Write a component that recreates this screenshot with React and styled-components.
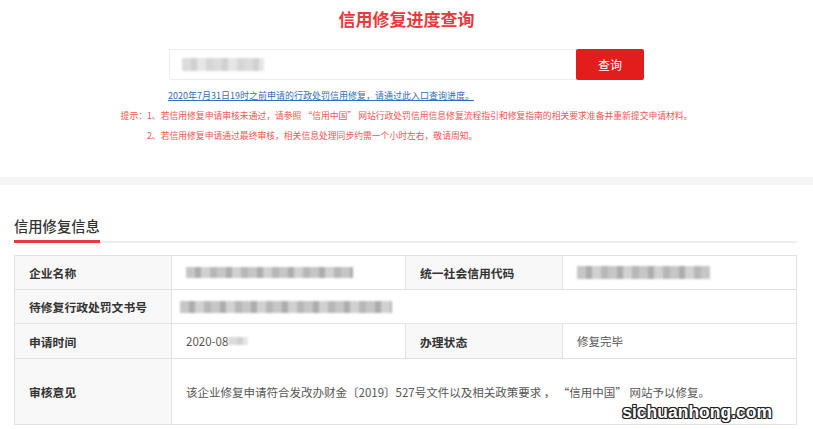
import React from 'react'
import styled, { createGlobalStyle } from 'styled-components'

const GlobalStyle = createGlobalStyle`
    html, body {
        margin: 0;
        padding: 0;
        background: #fff;
    }
    body {
        font-family: "Noto Sans CJK SC", "Noto Sans", sans-serif;
        color: #333;
    }
`;

// Top query area
const QueryArea = styled.section`
    display: flex;
    flex-direction: column;
    align-items: center;
    padding: 8px 0 34px;
`;

const PageTitle = styled.h1`
    margin: 0;
    font-size: 17px;
    line-height: 22px;
    font-weight: 700;
    color: #e63a3d;
`;

const SearchRow = styled.div`
    margin-top: 19px;
    display: flex;
    width: 475px;
    height: 31px;
`;

const SearchBox = styled.div`
    flex: 1;
    display: flex;
    align-items: center;
    padding-left: 12px;
    border: 1px solid #ececec;
    border-right: none;
    border-radius: 2px 0 0 2px;
    background: #fff;
`;

const SearchButton = styled.button`
    width: 68px;
    border: none;
    border-radius: 2px;
    background: #e31c1c;
    color: #fff;
    font-family: inherit;
    font-size: 12px;
    cursor: pointer;
`;

const OldEntry = styled.a`
    align-self: flex-start;
    margin: 10px 0 0 168px;
    font-size: 9px;
    line-height: 12px;
    color: #3a6cb3;
    text-decoration: underline;
`;

const Tips = styled.div`
    margin-top: 7px;
    display: flex;
    font-size: 8.8px;
    line-height: 14px;
    color: #ef5656;
`;

const TipList = styled.div`
    display: flex;
    flex-direction: column;
    gap: 6px;
`;

const Band = styled.div`
    height: 8px;
    background: #f5f5f5;
`;

// Info section
const InfoSection = styled.section`
    padding: 28px 16px 0 14px;
`;

const SectionHead = styled.div`
    border-bottom: 2px solid #eeeeee;
`;

const SectionTitle = styled.h2`
    display: inline-block;
    margin: 0 0 -2px;
    padding-bottom: 4px;
    font-size: 14.3px;
    line-height: 20px;
    font-weight: 500;
    color: #333;
    border-bottom: 3px solid #e8393c;
`;

const TableWrap = styled.div`
    position: relative;
    margin-top: 12px;
`;

const InfoTable = styled.div`
    display: grid;
    grid-template-columns: 157px 1fr 157px 1fr;
    grid-template-rows: 34px 34px 35px 66px;
    border-top: 1px solid #e2e2e2;
    border-left: 1px solid #e2e2e2;
`;

const Cell = styled.div`
    display: flex;
    align-items: center;
    padding-left: ${p => p.$pad ?? 14}px;
    border-right: 1px solid #e2e2e2;
    border-bottom: 1px solid #e2e2e2;
    grid-column: ${p => p.$span ? `span ${p.$span}` : 'auto'};
    background: ${p => p.$label ? '#f8f8f8' : '#fff'};
    font-size: ${p => p.$label ? '11.8px' : '11.5px'};
    font-weight: ${p => p.$label ? 700 : 400};
    color: ${p => p.$label ? '#333' : '#555'};
    white-space: pre;
`;

// blurred (masked) values in the screenshot
const Blur = styled.span`
    display: inline-block;
    width: ${p => p.$w}px;
    height: ${p => p.$h || 11}px;
    background: repeating-linear-gradient(
        90deg,
        ${p => p.$light ? '#d6d6d6' : '#bdbdbd'} 0 9px,
        ${p => p.$light ? '#c9c9c9' : '#9f9f9f'} 9px 15px,
        ${p => p.$light ? '#e2e2e2' : '#cacaca'} 15px 24px,
        ${p => p.$light ? '#cfcfcf' : '#ababab'} 24px 31px
    );
    filter: blur(1.3px);
    opacity: 0.85;
`;

const Watermark = styled.span`
    position: absolute;
    right: 25px;
    bottom: 2px;
    font-family: "Liberation Sans", Arial, sans-serif;
    font-size: 17.5px;
    font-weight: 700;
    color: #fff;
    text-shadow:
        1px 0 0 #222, -1px 0 0 #222, 0 1px 0 #222, 0 -1px 0 #222,
        1px 1px 0 #222, -1px -1px 0 #222, 1px -1px 0 #222, -1px 1px 0 #222;
`;

const App = () => {
    return (
        <>
            <GlobalStyle />

            <QueryArea>
                <PageTitle>信用修复进度查询</PageTitle>

                <SearchRow>
                    <SearchBox>
                        <Blur $w={82} $h={13} $light />
                    </SearchBox>
                    <SearchButton>查询</SearchButton>
                </SearchRow>

                <OldEntry href="#">2020年7月31日19时之前申请的行政处罚信用修复，请通过此入口查询进度。</OldEntry>

                <Tips>
                    <span>提示：</span>
                    <TipList>
                        <span>1、若信用修复申请审核未通过，请参照 “信用中国” 网站行政处罚信用信息修复流程指引和修复指南的相关要求准备并重新提交申请材料。</span>
                        <span>2、若信用修复申请通过最终审核，相关信息处理同步约需一个小时左右，敬请周知。</span>
                    </TipList>
                </Tips>
            </QueryArea>

            <Band />

            <InfoSection>
                <SectionHead>
                    <SectionTitle>信用修复信息</SectionTitle>
                </SectionHead>

                <TableWrap>
                    <InfoTable>
                        <Cell $label>企业名称</Cell>
                        <Cell><Blur $w={167} /></Cell>
                        <Cell $label>统一社会信用代码</Cell>
                        <Cell><Blur $w={133} $h={13} /></Cell>

                        <Cell $label>待修复行政处罚文书号</Cell>
                        <Cell $span={3} $pad={8}><Blur $w={212} $h={12} /></Cell>

                        <Cell $label>申请时间</Cell>
                        <Cell>2020-08<Blur $w={20} $h={8} $light /></Cell>
                        <Cell $label>办理状态</Cell>
                        <Cell>修复完毕</Cell>

                        <Cell $label>审核意见</Cell>
                        <Cell $span={3}>该企业修复申请符合发改办财金〔2019〕527号文件以及相关政策要求 ， “信用中国” 网站予以修复。</Cell>
                    </InfoTable>
                    <Watermark>sichuanhong.com</Watermark>
                </TableWrap>
            </InfoSection>
        </>
    )
}

export default App
